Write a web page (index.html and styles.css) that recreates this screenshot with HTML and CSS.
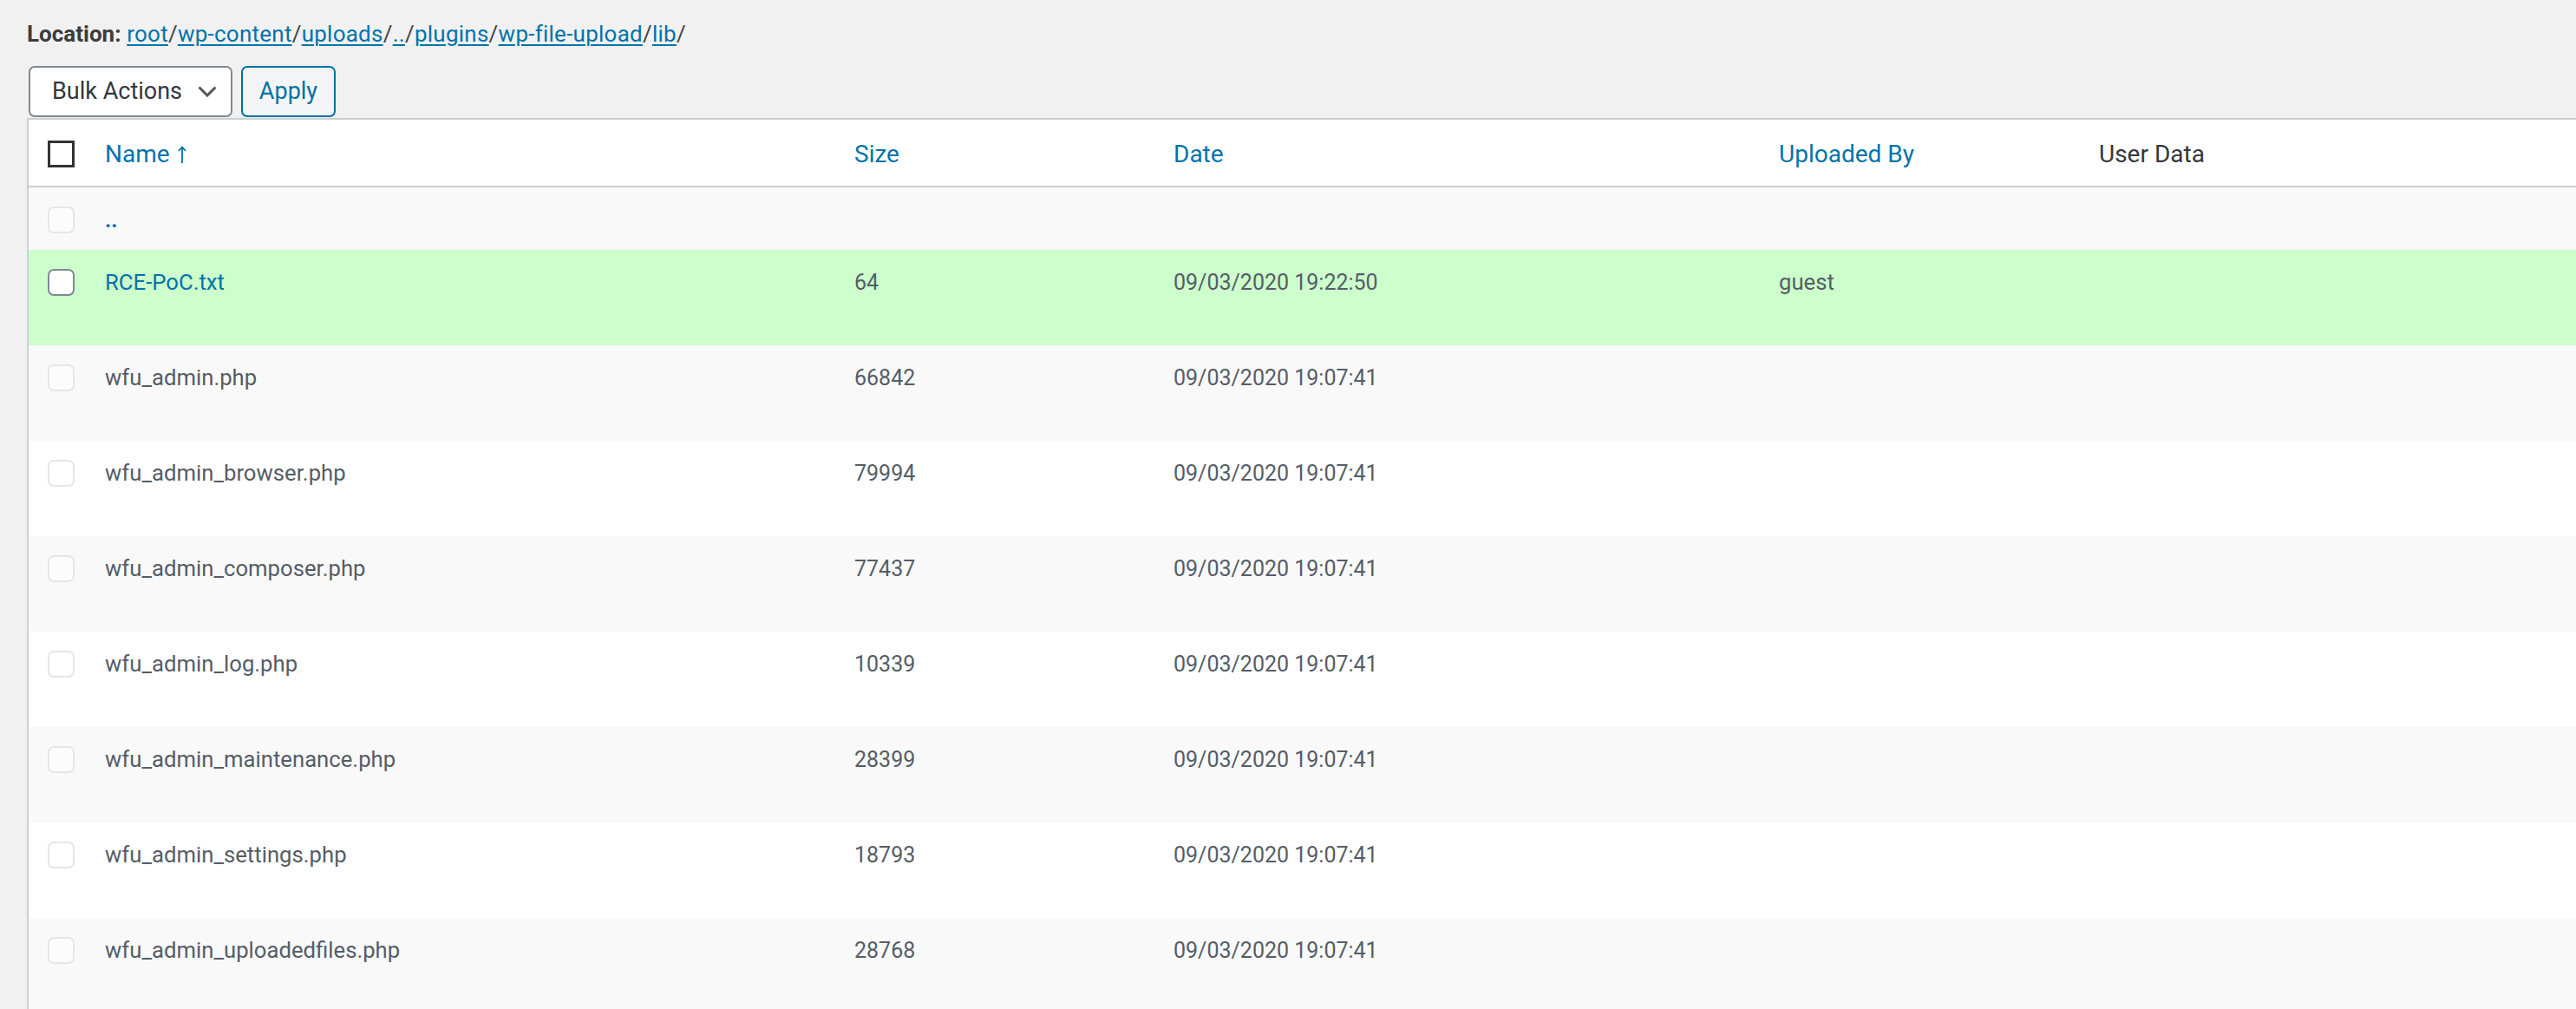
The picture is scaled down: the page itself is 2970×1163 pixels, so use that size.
FILE: index.html
```html
<!DOCTYPE html>
<html lang="en">
<head>
<meta charset="utf-8">
<title>File Browser</title>
<link rel="stylesheet" href="styles.css">
</head>
<body>
<div class="wrap">
  <p class="location"><strong>Location:</strong> <a href="#">root</a>/<a href="#">wp-content</a>/<a href="#">uploads</a>/<a href="#">..</a>/<a href="#">plugins</a>/<a href="#">wp-file-upload</a>/<a href="#">lib</a>/</p>
  <div class="tablenav">
    <div class="bulk-select">
      <span>Bulk Actions</span>
      <svg class="chevron" width="22" height="13" viewBox="0 0 22 13"><path d="M1.5 1.5 L11 11 L20.5 1.5" fill="none" stroke="#50575e" stroke-width="3"/></svg>
    </div>
    <button class="apply">Apply</button>
  </div>
  <table class="files">
    <colgroup>
      <col class="c-check">
      <col class="c-name">
      <col class="c-size">
      <col class="c-date">
      <col class="c-user">
      <col class="c-data">
    </colgroup>
    <thead>
      <tr>
        <td class="check"><span class="cb cb-head"></span></td>
        <th><a href="#">Name <svg class="sort" width="10" height="20" viewBox="0 0 10 20"><path d="M5 1.5 V20 M1 6 L5 1.5 L9 6" fill="none" stroke="#0073aa" stroke-width="1.8"/></svg></a></th>
        <th><a href="#">Size</a></th>
        <th><a href="#">Date</a></th>
        <th><a href="#">Uploaded By</a></th>
        <th class="plain">User Data</th>
      </tr>
    </thead>
    <tbody>
      <tr class="alt">
        <td class="check"><span class="cb cb-off"></span></td>
        <td><a class="up" href="#">..</a></td>
        <td></td><td></td><td></td><td></td>
      </tr>
      <tr class="new">
        <td class="check"><span class="cb cb-on"></span></td>
        <td class="name"><a href="#">RCE-PoC.txt</a><div class="row-actions"></div></td>
        <td>64</td><td>09/03/2020 19:22:50</td><td class="name">guest</td><td></td>
      </tr>
      <tr class="alt">
        <td class="check"><span class="cb cb-off"></span></td>
        <td class="name">wfu_admin.php<div class="row-actions"></div></td>
        <td>66842</td><td>09/03/2020 19:07:41</td><td></td><td></td>
      </tr>
      <tr>
        <td class="check"><span class="cb cb-off"></span></td>
        <td class="name">wfu_admin_browser.php<div class="row-actions"></div></td>
        <td>79994</td><td>09/03/2020 19:07:41</td><td></td><td></td>
      </tr>
      <tr class="alt">
        <td class="check"><span class="cb cb-off"></span></td>
        <td class="name">wfu_admin_composer.php<div class="row-actions"></div></td>
        <td>77437</td><td>09/03/2020 19:07:41</td><td></td><td></td>
      </tr>
      <tr>
        <td class="check"><span class="cb cb-off"></span></td>
        <td class="name">wfu_admin_log.php<div class="row-actions"></div></td>
        <td>10339</td><td>09/03/2020 19:07:41</td><td></td><td></td>
      </tr>
      <tr class="alt">
        <td class="check"><span class="cb cb-off"></span></td>
        <td class="name">wfu_admin_maintenance.php<div class="row-actions"></div></td>
        <td>28399</td><td>09/03/2020 19:07:41</td><td></td><td></td>
      </tr>
      <tr>
        <td class="check"><span class="cb cb-off"></span></td>
        <td class="name">wfu_admin_settings.php<div class="row-actions"></div></td>
        <td>18793</td><td>09/03/2020 19:07:41</td><td></td><td></td>
      </tr>
      <tr class="alt">
        <td class="check"><span class="cb cb-off"></span></td>
        <td class="name">wfu_admin_uploadedfiles.php<div class="row-actions"></div></td>
        <td>28768</td><td>09/03/2020 19:07:41</td><td></td><td></td>
      </tr>
    </tbody>
  </table>
</div>
</body>
</html>
```
FILE: styles.css
```css
html, body {
  margin: 0;
  padding: 0;
  background: #f1f1f1;
  overflow: hidden;
}
body {
  font-family: Roboto, "Noto Sans", sans-serif;
  font-size: 25px;
  color: #555d66;
}
.wrap {
  padding-left: 31px;
}
a {
  color: #0073aa;
}
.location {
  margin: 21px 0 0 0;
  font-size: 26px;
  line-height: 37px;
  color: #444;
  letter-spacing: 0.25px;
}
.location strong {
  font-weight: 700;
  color: #3c3c3c;
  letter-spacing: 0;
}
.location a {
  text-decoration: underline;
  text-underline-offset: 3px;
  text-decoration-thickness: 2px;
}
.tablenav {
  display: flex;
  gap: 10px;
  margin: 18px 0 1px 2px;
  height: 59px;
}
.bulk-select {
  box-sizing: border-box;
  width: 235px;
  height: 59px;
  border: 2px solid #7e8993;
  border-radius: 7px;
  background: #fff;
  display: flex;
  align-items: center;
  justify-content: space-between;
  padding: 0 16px 2px 25px;
  font-size: 27px;
  color: #32373c;
}
.chevron {
  display: block;
  margin-top: 2px;
}
.apply {
  box-sizing: border-box;
  width: 109px;
  height: 59px;
  border: 2px solid #0071a1;
  border-radius: 7px;
  background: #f3f5f6;
  color: #0071a1;
  font-family: Roboto, "Noto Sans", sans-serif;
  font-size: 27px;
  padding: 0 0 2px 0;
}
.files {
  width: 3000px;
  table-layout: fixed;
  border-collapse: separate;
  border-spacing: 0;
  border-top: 2px solid #ccd0d4;
  border-left: 2px solid #ccd0d4;
  background: #fff;
}
.c-check { width: 69px; }
.c-name { width: 864px; }
.c-size { width: 368px; }
.c-date { width: 698px; }
.c-user { width: 369px; }
.files thead th,
.files thead td {
  border-bottom: 2px solid #ccd0d4;
  text-align: left;
  font-weight: 400;
  font-size: 28px;
  line-height: 38px;
  padding: 21px 19px 17px 19px;
  vertical-align: top;
}
.files thead a {
  text-decoration: none;
  color: #0073aa;
}
.files thead th.plain {
  color: #32373c;
}
.sort {
  display: inline-block;
  vertical-align: -1px;
  margin-left: 2px;
}
.files thead td.check {
  padding: 24px 0 0 22px;
}
.files tbody td {
  padding: 19px 19px 16px 19px;
  line-height: 37px;
  vertical-align: top;
  color: #555d66;
}
.files tbody td.name {
  font-size: 25.7px;
}
.files tbody td a {
  text-decoration: none;
  color: #0073aa;
}
.files tbody td a.up {
  font-weight: 700;
}
.files tbody td.check {
  padding: 22px 0 0 22px;
}
.row-actions {
  height: 38px;
}
.files tbody tr.alt {
  background: #f9f9f9;
}
.files tbody tr.new {
  background: #ccffcc;
}
.cb {
  display: block;
  box-sizing: border-box;
  width: 31px;
  height: 31px;
}
.cb-head {
  border: 3px solid #333;
  background: #fff;
}
.cb-on {
  border: 2px solid #7e8993;
  border-radius: 7px;
  background: #fff;
}
.cb-off {
  border: 2px solid rgba(222, 222, 222, 0.75);
  border-radius: 7px;
  background: rgba(255, 255, 255, 0.5);
}
```
